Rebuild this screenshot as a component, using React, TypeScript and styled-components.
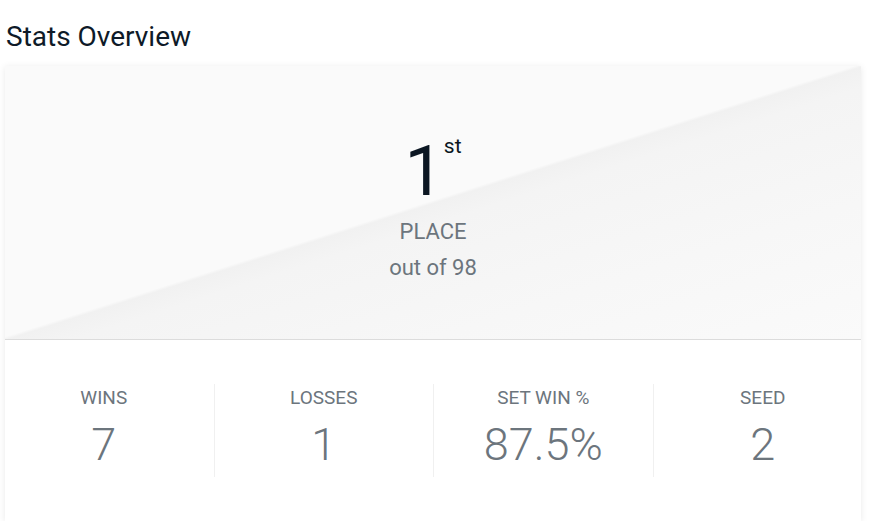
import React from 'react'
import styled, { createGlobalStyle } from 'styled-components'

const GlobalStyle = createGlobalStyle`
  * {
    box-sizing: border-box;
  }
  body {
    margin: 0;
    background: #ffffff;
    font-family: Roboto, 'Noto Sans', Arial, sans-serif;
  }
`

const Page = styled.div`
  padding: 0 12px 0 5px;
`

const Title = styled.h3`
  margin: 20px 0 12px 1px;
  font-size: 28px;
  font-weight: 400;
  line-height: 1.2;
  color: #0e1a28;
`

const Card = styled.section`
  width: 856px;
  background: #ffffff;
  box-shadow: 0 1px 7px rgba(0, 0, 0, 0.09);
  overflow: hidden;
`

// soft diagonal split: light upper-left half, slightly darker lower half
const Hero = styled.div`
  display: flex;
  flex-direction: column;
  align-items: center;
  height: 274px;
  padding-top: 70px;
  border-bottom: 1px solid #dcdcdc;
  background: linear-gradient(
    to bottom right,
    #fafafa 49.6%,
    #f1f1f1 50.2%,
    #f4f4f4 54%,
    #f7f7f7 75%,
    #fafafa 100%
  );
`

const Rank = styled.div`
  display: flex;
  align-items: flex-start;
  height: 70px;
  color: #0b1622;
`

const RankNumber = styled.span`
  font-size: 70px;
  font-weight: 400;
  line-height: 1;
`

const RankSuffix = styled.sup`
  font-size: 21px;
  font-weight: 400;
  line-height: 1;
  vertical-align: top;
`

const HeroLabel = styled.div<{ size: number; gap: number }>`
  margin-top: ${({ gap }) => gap}px;
  font-size: ${({ size }) => size}px;
  line-height: 1.5;
  color: #6c757d;
`

const StatsArea = styled.div`
  display: flex;
  align-items: center;
  height: 181px;
`

const StatsRow = styled.div`
  display: grid;
  grid-template-columns: repeat(4, 1fr);
  flex: 1;
  margin: 0 -11px;
`

const Stat = styled.div<{ first?: boolean }>`
  display: flex;
  flex-direction: column;
  align-items: center;
  height: 93px;
  border-left: ${({ first }) => (first ? 'none' : '1px solid #f0f0f0')};
`

const StatLabel = styled.div`
  margin-top: 2px;
  font-size: 19px;
  line-height: 1.3;
  color: #6c757d;
  text-transform: uppercase;
`

const StatValue = styled.div`
  margin-top: 12px;
  font-size: 45px;
  font-weight: 300;
  line-height: 1;
  color: #6c757d;
`

const STATS = [
  { label: 'Wins', value: '7' },
  { label: 'Losses', value: '1' },
  { label: 'Set Win %', value: '87.5%' },
  { label: 'Seed', value: '2' },
]

const App = () => (
  <Page>
    <GlobalStyle />
    <Title>Stats Overview</Title>
    <Card>
      <Hero>
        <Rank>
          <RankNumber>1</RankNumber>
          <RankSuffix>st</RankSuffix>
        </Rank>
        <HeroLabel size={22} gap={9}>
          PLACE
        </HeroLabel>
        <HeroLabel size={22} gap={3}>
          out of 98
        </HeroLabel>
      </Hero>
      <StatsArea>
        <StatsRow>
          {STATS.map(({ label, value }, index) => (
            <Stat key={label} first={index === 0}>
              <StatLabel>{label}</StatLabel>
              <StatValue>{value}</StatValue>
            </Stat>
          ))}
        </StatsRow>
      </StatsArea>
    </Card>
  </Page>
)

export default App
